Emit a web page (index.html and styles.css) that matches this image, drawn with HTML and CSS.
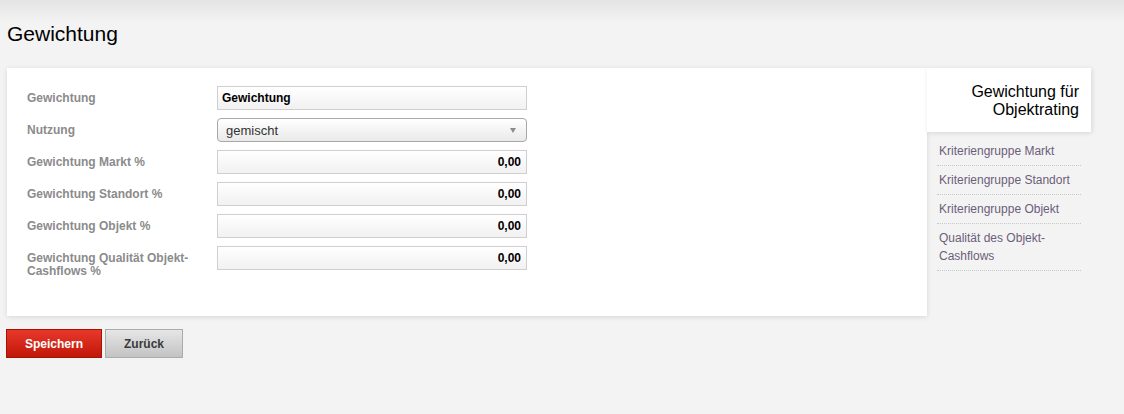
FILE: index.html
```html
<!DOCTYPE html>
<html lang="de">
<head>
    <meta charset="UTF-8">
    <meta name="viewport" content="width=device-width, initial-scale=1.0">
    <title>Gewichtung</title>
    <link rel="stylesheet" href="styles.css">
</head>
<body>
    <h1 class="page-title">Gewichtung</h1>
    <div class="layout">
        <div class="panel">
            <form class="form">
                <div class="row">
                    <label class="label">Gewichtung</label>
                    <input class="field field-name" type="text" value="Gewichtung">
                </div>
                <div class="row">
                    <label class="label">Nutzung</label>
                    <div class="select-wrap">
                        <select class="select">
                            <option>gemischt</option>
                            <option>Wohnen</option>
                            <option>Gewerbe</option>
                        </select>
                    </div>
                </div>
                <div class="row">
                    <label class="label">Gewichtung Markt %</label>
                    <input class="field field-num" type="text" value="0,00">
                </div>
                <div class="row">
                    <label class="label">Gewichtung Standort %</label>
                    <input class="field field-num" type="text" value="0,00">
                </div>
                <div class="row">
                    <label class="label">Gewichtung Objekt %</label>
                    <input class="field field-num" type="text" value="0,00">
                </div>
                <div class="row">
                    <label class="label">Gewichtung Qualität Objekt-Cashflows %</label>
                    <input class="field field-num" type="text" value="0,00">
                </div>
            </form>
        </div>
        <div class="side">
            <div class="side-tab">Gewichtung für Objektrating</div>
            <ul class="side-nav">
                <li><a href="#">Kriteriengruppe Markt</a></li>
                <li><a href="#">Kriteriengruppe Standort</a></li>
                <li><a href="#">Kriteriengruppe Objekt</a></li>
                <li><a href="#">Qualität des Objekt-Cashflows</a></li>
            </ul>
        </div>
    </div>
    <div class="actions">
        <button class="btn btn-save" type="button">Speichern</button>
        <button class="btn btn-back" type="button">Zurück</button>
    </div>
</body>
</html>
```

FILE: styles.css
```css
body {
    margin: 0;
    background: linear-gradient(#e4e4e4, #f3f3f3 22px) no-repeat, #f3f3f3;
    font-family: "Liberation Sans", Arial, Helvetica, sans-serif;
    color: #000;
}
.page-title {
    margin: 0 0 22px 0;
    padding: 22px 0 0 7px;
    font-size: 21px;
    font-weight: normal;
    line-height: 24px;
    height: 24px;
}
.layout {
    display: flex;
    align-items: flex-start;
    padding-left: 7px;
}
.panel {
    width: 920px;
    box-sizing: border-box;
    background: #fff;
    padding: 18px 0 30px 20px;
    box-shadow: 0 1px 5px rgba(0, 0, 0, 0.12);
}
.row {
    display: flex;
    align-items: flex-start;
    margin-bottom: 8px;
}
.label {
    width: 190px;
    padding-top: 6px;
    padding-right: 10px;
    box-sizing: border-box;
    font-size: 12px;
    line-height: 13px;
    font-weight: bold;
    color: #8b8b8b;
}
.field {
    width: 310px;
    height: 24px;
    box-sizing: border-box;
    border: 1px solid #cfcfcf;
    background: linear-gradient(#fff, #f1f1f1);
    padding: 0 5px 0 4px;
    margin: 0;
    font-family: "Liberation Sans", Arial, sans-serif;
    font-size: 12px;
    font-weight: bold;
    color: #000;
    outline: none;
}
.field-num {
    text-align: right;
}
.select-wrap {
    position: relative;
    width: 310px;
    height: 24px;
}
.select-wrap::after {
    content: "";
    position: absolute;
    right: 11px;
    top: 10px;
    border-left: 3px solid transparent;
    border-right: 3px solid transparent;
    border-top: 5px solid #8c8c8c;
    pointer-events: none;
}
.select {
    appearance: none;
    -webkit-appearance: none;
    width: 100%;
    height: 24px;
    box-sizing: border-box;
    border: 1px solid #a8a8a8;
    border-radius: 4px;
    background: linear-gradient(#fff, #e9e9e9);
    padding: 0 8px;
    margin: 0;
    font-family: "Liberation Sans", Arial, sans-serif;
    font-size: 13px;
    color: #333;
    outline: none;
}
.side {
    width: 164px;
}
.side-tab {
    position: relative;
    z-index: 1;
    background: #fff;
    box-shadow: 1px 1px 5px rgba(0, 0, 0, 0.12);
    height: 64px;
    box-sizing: border-box;
    padding: 15px 12px 0 12px;
    text-align: right;
    font-size: 16px;
    line-height: 18px;
}
.side-nav {
    list-style: none;
    margin: 5px 10px 0 10px;
    padding: 0;
    width: 144px;
}
.side-nav li {
    border-bottom: 1px dotted #c8c8c8;
    padding: 5px 0 5px 2px;
    font-size: 12px;
    line-height: 18px;
}
.side-nav a {
    color: #6b5e79;
    text-decoration: none;
}
.actions {
    display: flex;
    gap: 3px;
    padding: 13px 0 0 6px;
}
.btn {
    height: 29px;
    box-sizing: border-box;
    font-family: "Liberation Sans", Arial, sans-serif;
    font-size: 12px;
    font-weight: bold;
    cursor: pointer;
    padding: 0;
}
.btn-save {
    width: 96px;
    color: #fff;
    border: 1px solid #a51306;
    background: linear-gradient(#e8382c, #c11708);
}
.btn-back {
    width: 78px;
    color: #3a3a3a;
    border: 1px solid #ababab;
    background: linear-gradient(#e6e6e6, #c3c3c3);
}
```
